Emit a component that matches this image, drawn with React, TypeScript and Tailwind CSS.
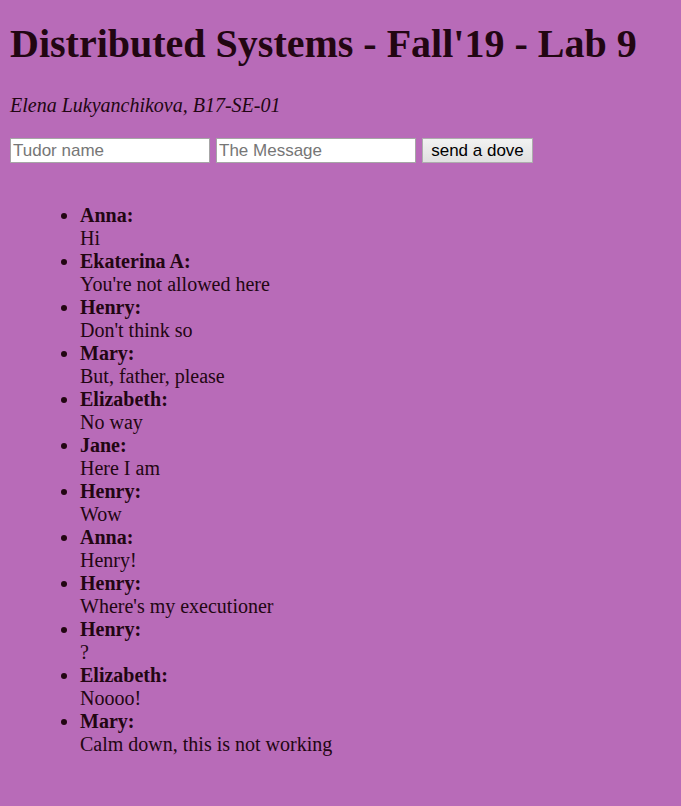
import React from "react";

const messages: [string, string][] = [
  ["Anna", "Hi"],
  ["Ekaterina A", "You're not allowed here"],
  ["Henry", "Don't think so"],
  ["Mary", "But, father, please"],
  ["Elizabeth", "No way"],
  ["Jane", "Here I am"],
  ["Henry", "Wow"],
  ["Anna", "Henry!"],
  ["Henry", "Where's my executioner"],
  ["Henry", "?"],
  ["Elizabeth", "Noooo!"],
  ["Mary", "Calm down, this is not working"],
];

export default function App() {
  return (
    <div className="min-h-[806px] bg-[#b86bb8] px-[10px] pt-[21px] pb-[40px] font-['Liberation_Serif','Times_New_Roman',serif] text-[#220612]">
      <h1 className="text-[40px] font-bold leading-[46px]">
        Distributed Systems - Fall'19 - Lab 9
      </h1>
      <p className="mt-[27px] text-[20px] italic leading-[23px]">
        Elena Lukyanchikova, B17-SE-01
      </p>
      <form
        className="mt-[21px] flex items-center gap-[6px] font-['Liberation_Sans',Arial,sans-serif]"
        onSubmit={(e) => e.preventDefault()}
      >
        <input
          type="text"
          placeholder="Tudor name"
          className="box-border h-[25px] w-[200px] border border-[#a6a6a6] bg-white px-[2px] text-[17px] text-black placeholder:text-[#767676] outline-none"
        />
        <input
          type="text"
          placeholder="The Message"
          className="box-border h-[25px] w-[200px] border border-[#a6a6a6] bg-white px-[2px] text-[17px] text-black placeholder:text-[#767676] outline-none"
        />
        <button
          type="submit"
          className="box-border h-[25px] w-[111px] border border-[#adadad] bg-gradient-to-b from-[#f2f2f2] to-[#e0e0e0] text-[17px] leading-none text-black"
        >
          send a dove
        </button>
      </form>
      <ul className="ml-[20px] mt-[41px] list-disc pl-[50px] text-[20px] leading-[23px]">
        {messages.map(([name, msg], i) => (
          <li key={i}>
            <b className="font-bold">{name}:</b>
            <br />
            {msg}
          </li>
        ))}
      </ul>
    </div>
  );
}
